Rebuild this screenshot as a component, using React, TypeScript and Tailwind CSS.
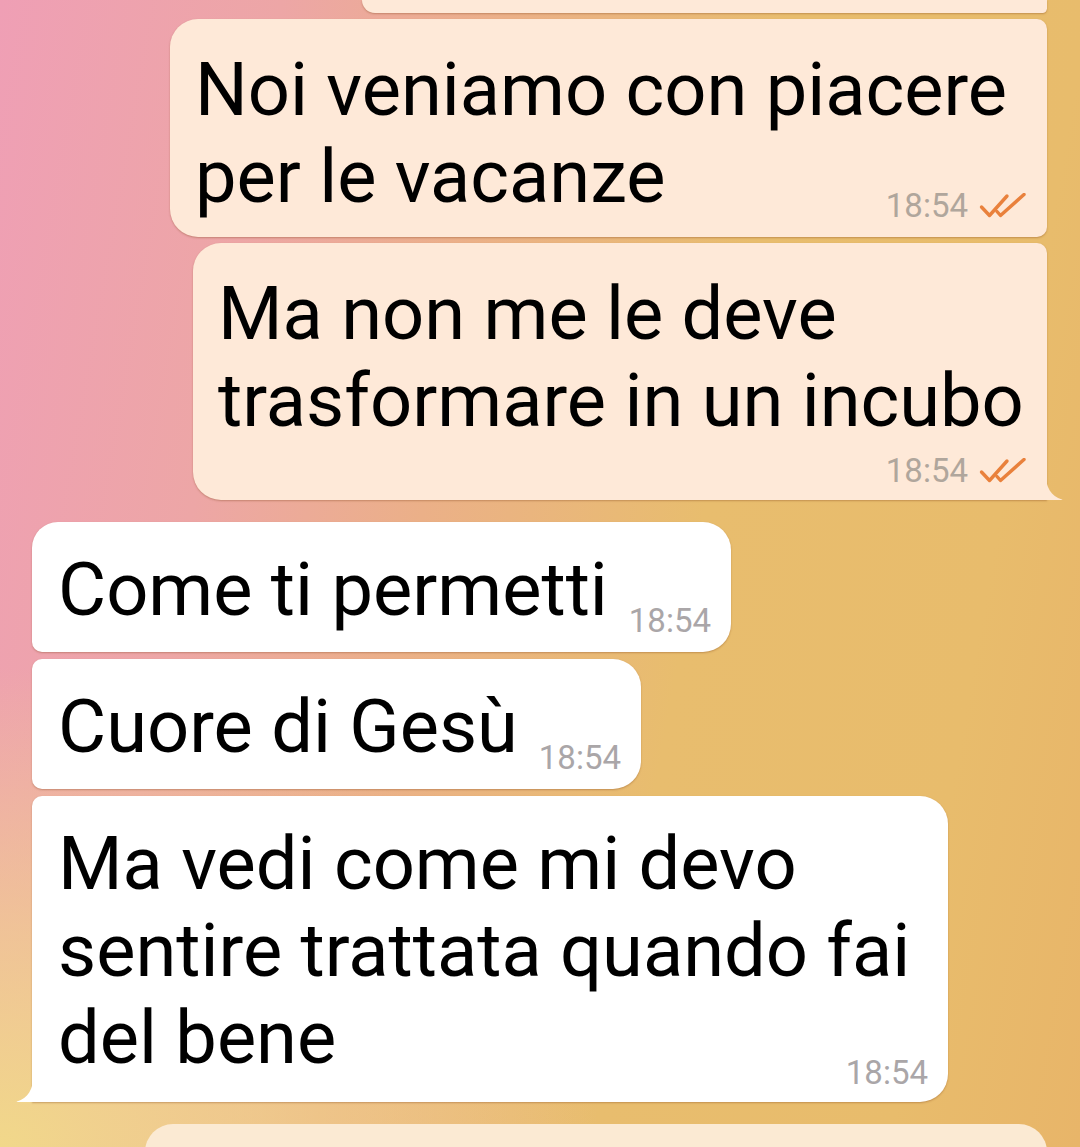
import React from "react";

const OUT = "#fee9d8";

function Checks() {
  return (
    <svg width="48" height="26" viewBox="0 0 48 26" className="ml-[11px] mb-[7px]" fill="none">
      <path d="M2.5 14 L10.5 22.5 L28 3" stroke="#e9813c" strokeWidth="3.4" strokeLinecap="round" strokeLinejoin="round" />
      <path d="M18 18.5 L21.5 22.5 L45 1.5" stroke="#e9813c" strokeWidth="3.4" strokeLinecap="round" strokeLinejoin="round" />
    </svg>
  );
}

function TailRight({ color }: { color: string }) {
  return (
    <svg width="18" height="28" viewBox="0 0 18 28" className="absolute bottom-0 right-[-16px]">
      <path d="M0 0 C1 16 6 24 17 27.5 C17.5 27.7 17.5 28 17 28 L0 28 Z" fill={color} />
    </svg>
  );
}

function TailLeft({ color }: { color: string }) {
  return (
    <svg width="18" height="28" viewBox="0 0 18 28" className="absolute bottom-0 left-[-16px]">
      <path d="M18 0 C17 16 12 24 1 27.5 C0.5 27.7 0.5 28 1 28 L18 28 Z" fill={color} />
    </svg>
  );
}

export default function App() {
  return (
    <div
      className="relative h-[1147px] w-[1080px] overflow-hidden flex flex-col font-['Roboto',sans-serif] text-black bg-[radial-gradient(ellipse_600px_480px_at_0%_100%,#f1d88a_0%,rgba(241,216,138,0.6)_45%,rgba(241,216,138,0)_100%),linear-gradient(100deg,#ef9fb5_0%,#eda6a6_22%,#ebb088_40%,#e8bd6e_62%,#e8bc6c_85%,#e8b569_100%)]"
    >
      {/* partial top bubble */}
      <div className="shrink-0 self-end mr-[33px] w-[685px] h-[13px] rounded-bl-[28px] rounded-br-[10px] bg-[#fee9d8] shadow-[0_1px_2px_rgba(120,60,20,0.35)]" />

      {/* bubble 1 */}
      <div className="shrink-0 mt-[6px] self-end mr-[33px] w-[877px] bg-[#fee9d8] rounded-tl-[28px] rounded-bl-[28px] rounded-tr-[10px] rounded-br-[10px] pt-[27px] pl-[25px] pr-[20px] pb-[11px] shadow-[0_1px_2px_rgba(120,60,20,0.35)] flex flex-col">
        <div className="text-[74px] leading-[87px]">
          Noi veniamo con piacere
          <br />
          per le vacanze
        </div>
        <div className="-mt-[34px] flex items-end justify-end h-[40px]">
          <span className="text-[33px] leading-[40px] text-[#b0a69c]">18:54</span>
          <Checks />
        </div>
      </div>

      {/* bubble 2 */}
      <div className="shrink-0 relative mt-[6px] self-end mr-[33px] w-[854px] bg-[#fee9d8] rounded-tl-[28px] rounded-bl-[28px] rounded-tr-[10px] rounded-br-none pt-[27px] pl-[25px] pr-[20px] pb-[9px] shadow-[0_1px_2px_rgba(120,60,20,0.35)] flex flex-col">
        <div className="text-[74px] leading-[87px] whitespace-nowrap">
          Ma non me le deve
          <br />
          trasformare in un incubo
        </div>
        <div className="mt-[7px] flex items-end justify-end h-[40px]">
          <span className="text-[33px] leading-[40px] text-[#b0a69c]">18:54</span>
          <Checks />
        </div>
        <TailRight color={OUT} />
      </div>

      {/* bubble 3 */}
      <div className="shrink-0 mt-[22px] ml-[32px] w-[699px] bg-white rounded-tl-[26px] rounded-bl-[10px] rounded-tr-[28px] rounded-br-[28px] pt-[24px] pl-[26px] pr-[20px] pb-[11px] shadow-[0_1px_2px_rgba(120,60,20,0.35)] flex items-start">
        <div className="text-[74px] leading-[87px] mb-[8px] whitespace-nowrap">Come ti permetti</div>
        <span className="ml-auto self-end text-[33px] leading-[40px] text-[#aaa6a8]">18:54</span>
      </div>

      {/* bubble 4 */}
      <div className="shrink-0 mt-[7px] ml-[32px] w-[609px] bg-white rounded-tl-[10px] rounded-bl-[10px] rounded-tr-[28px] rounded-br-[28px] pt-[24px] pl-[26px] pr-[20px] pb-[11px] shadow-[0_1px_2px_rgba(120,60,20,0.35)] flex items-start">
        <div className="text-[74px] leading-[87px] mb-[8px] whitespace-nowrap">Cuore di Gesù</div>
        <span className="ml-auto self-end text-[33px] leading-[40px] text-[#aaa6a8]">18:54</span>
      </div>

      {/* bubble 5 */}
      <div className="shrink-0 relative mt-[7px] ml-[32px] w-[916px] bg-white rounded-tl-[10px] rounded-bl-none rounded-tr-[28px] rounded-br-[28px] pt-[24px] pl-[26px] pr-[20px] pb-[9px] shadow-[0_1px_2px_rgba(120,60,20,0.35)] flex flex-col">
        <div className="text-[74px] leading-[87px]">
          Ma vedi come mi devo
          <br />
          sentire trattata quando fai
          <br />
          del bene
        </div>
        <div className="-mt-[28px] flex items-end justify-end h-[40px]">
          <span className="text-[33px] leading-[40px] text-[#aaa6a8]">18:54</span>
        </div>
        <TailLeft color="#ffffff" />
      </div>

      {/* partial bottom bubble */}
      <div className="shrink-0 mt-[22px] ml-[145px] w-[902px] h-[80px] bg-[#fbead3] rounded-t-[28px]" />
    </div>
  );
}
